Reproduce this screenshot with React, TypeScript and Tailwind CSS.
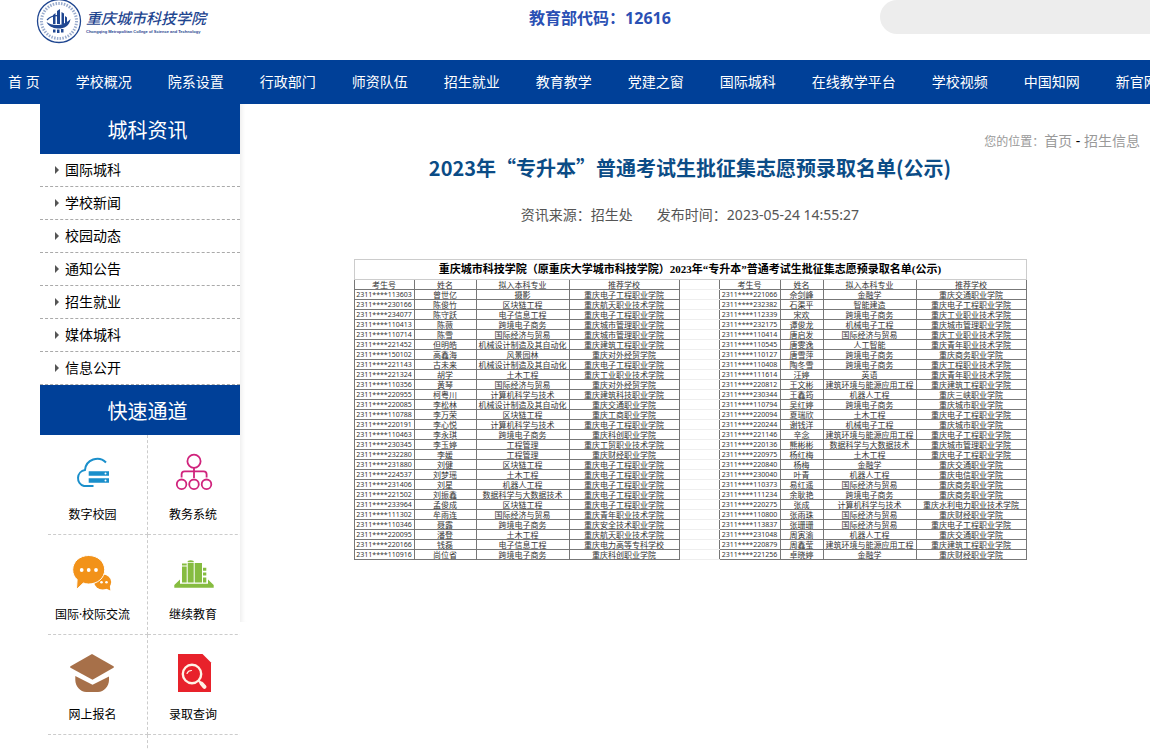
import { ReactNode } from "react";

const navItems = [
  "首 页",
  "学校概况",
  "院系设置",
  "行政部门",
  "师资队伍",
  "招生就业",
  "教育教学",
  "党建之窗",
  "国际城科",
  "在线教学平台",
  "学校视频",
  "中国知网",
  "新官网",
];

const newsItems = [
  "国际城科",
  "学校新闻",
  "校园动态",
  "通知公告",
  "招生就业",
  "媒体城科",
  "信息公开",
];

const columns = ["考生号", "姓名", "拟入本科专业", "推荐学校"];

// number, name, major, school
const leftRows = [
  ["2311****113603", "曾世亿", "摄影", "重庆电子工程职业学院"],
  ["2311****230166", "陈俊竹", "区块链工程", "重庆航天职业技术学院"],
  ["2311****234077", "陈守跃", "电子信息工程", "重庆电子工程职业学院"],
  ["2311****110413", "陈薇", "跨境电子商务", "重庆城市管理职业学院"],
  ["2311****110714", "陈雪", "国际经济与贸易", "重庆城市管理职业学院"],
  ["2311****221452", "但明皓", "机械设计制造及其自动化", "重庆建筑工程职业学院"],
  ["2311****150102", "高鑫海", "风景园林", "重庆对外经贸学院"],
  ["2311****221143", "古未来", "机械设计制造及其自动化", "重庆电子工程职业学院"],
  ["2311****221324", "胡学", "土木工程", "重庆工业职业技术学院"],
  ["2311****110356", "黄琴", "国际经济与贸易", "重庆对外经贸学院"],
  ["2311****220955", "柯粤川", "计算机科学与技术", "重庆建筑科技职业学院"],
  ["2311****220085", "李松林", "机械设计制造及其自动化", "重庆交通职业学院"],
  ["2311****110788", "李万荣", "区块链工程", "重庆工商职业学院"],
  ["2311****220191", "李心悦", "计算机科学与技术", "重庆电子工程职业学院"],
  ["2311****110463", "李永琪", "跨境电子商务", "重庆科创职业学院"],
  ["2311****230345", "李玉婷", "工程管理", "重庆工贸职业技术学院"],
  ["2311****232280", "李媛", "工程管理", "重庆财经职业学院"],
  ["2311****231880", "刘健", "区块链工程", "重庆电子工程职业学院"],
  ["2311****224537", "刘梦瑶", "土木工程", "重庆电子工程职业学院"],
  ["2311****231406", "刘星", "机器人工程", "重庆电子工程职业学院"],
  ["2311****221502", "刘振鑫", "数据科学与大数据技术", "重庆电子工程职业学院"],
  ["2311****233964", "孟俊成", "区块链工程", "重庆电子工程职业学院"],
  ["2311****111302", "牟雨连", "国际经济与贸易", "重庆青年职业技术学院"],
  ["2311****110346", "聂露", "跨境电子商务", "重庆安全技术职业学院"],
  ["2311****220095", "潘登", "土木工程", "重庆航天职业技术学院"],
  ["2311****220166", "钱磊", "电子信息工程", "重庆电力高等专科学校"],
  ["2311****110916", "尚位省", "跨境电子商务", "重庆科创职业学院"],
];

const rightRows = [
  ["2311****221066", "佘剑峰", "金融学", "重庆交通职业学院"],
  ["2311****232382", "石渠平", "智能建造", "重庆电子工程职业学院"],
  ["2311****112339", "宋欢", "跨境电子商务", "重庆工业职业技术学院"],
  ["2311****232175", "谭俊龙", "机械电子工程", "重庆城市管理职业学院"],
  ["2311****110414", "唐启发", "国际经济与贸易", "重庆工业职业技术学院"],
  ["2311****110545", "唐雯逸", "人工智能", "重庆青年职业技术学院"],
  ["2311****110127", "唐雪萍", "跨境电子商务", "重庆商务职业学院"],
  ["2311****110408", "陶冬雪", "跨境电子商务", "重庆工程职业技术学院"],
  ["2311****111614", "汪婷", "英语", "重庆青年职业技术学院"],
  ["2311****220812", "王文彬", "建筑环境与能源应用工程", "重庆建筑工程职业学院"],
  ["2311****230344", "王鑫筠", "机器人工程", "重庆三峡职业学院"],
  ["2311****110794", "吴红婷", "跨境电子商务", "重庆城市职业学院"],
  ["2311****220094", "夏瑞欣", "土木工程", "重庆电子工程职业学院"],
  ["2311****220244", "谢钱洋", "机械电子工程", "重庆城市职业学院"],
  ["2311****221146", "辛念", "建筑环境与能源应用工程", "重庆电子工程职业学院"],
  ["2311****220136", "熊彬彬", "数据科学与大数据技术", "重庆城市管理职业学院"],
  ["2311****220975", "杨红梅", "土木工程", "重庆电子工程职业学院"],
  ["2311****220840", "杨梅", "金融学", "重庆交通职业学院"],
  ["2311****230040", "叶青", "机器人工程", "重庆电信职业学院"],
  ["2311****110373", "易红遥", "国际经济与贸易", "重庆商务职业学院"],
  ["2311****111234", "余耿艳", "跨境电子商务", "重庆商务职业学院"],
  ["2311****220275", "张成", "计算机科学与技术", "重庆水利电力职业技术学院"],
  ["2311****110800", "张雨珠", "国际经济与贸易", "重庆财经职业学院"],
  ["2311****113837", "张珊珊", "国际经济与贸易", "重庆电子工程职业学院"],
  ["2311****231048", "周寅渝", "机器人工程", "重庆交通职业学院"],
  ["2311****220879", "周鑫莹", "建筑环境与能源应用工程", "重庆建筑工程职业学院"],
  ["2311****221256", "卓晓婷", "金融学", "重庆财经职业学院"],
];

const CloudIcon = () => (
  <svg viewBox="0 0 48 48" className="size-12">
    <path
      d="M37 13.5A12.3 12.3 0 0 0 16 21A8.2 8.2 0 0 0 15 37H24.5"
      fill="none"
      stroke="#1a8fcb"
      strokeWidth="2"
    />
    <path d="M19.7 22.3H40v4.5H19.7zM19.7 29.2H40v4.5H19.7z" fill="#1a8fcb" />
    <circle cx="36.5" cy="24.5" r="1" fill="#fff" />
    <circle cx="36.5" cy="31.4" r="1" fill="#fff" />
  </svg>
);

const TreeIcon = () => (
  <svg viewBox="0 0 48 48" className="size-12" fill="none" stroke="#d0237c" strokeWidth="1.8">
    <circle cx="25" cy="12.3" r="6.6" />
    <circle cx="12.6" cy="35.3" r="4.8" />
    <circle cx="25" cy="35.3" r="4.8" />
    <circle cx="37.5" cy="35.3" r="4.8" />
    <path d="M25 19v10M12.6 28.5v-3.2a3 3 0 0 1 3-3h19a3 3 0 0 1 3 3v3.2" />
  </svg>
);

const ChatIcon = () => (
  <svg viewBox="0 0 48 48" className="size-12" fill="#f29219">
    <ellipse cx="33.7" cy="33" rx="8.5" ry="7.6" />
    <path d="M36 39l5.3 2.6-.6-6z" />
    <path
      d="M19.7 6.5c9 0 16 6.2 16 14.3s-7 14.2-16 14.2c-2.2 0-3.8-.4-5.4-1L7.5 40.5l.6-10C5.3 28 3.7 24.7 3.7 20.8c0-8.1 7-14.3 16-14.3z"
      stroke="#fff"
      strokeWidth="1"
    />
    <g fill="#fff">
      <circle cx="12.7" cy="21" r="1.9" />
      <circle cx="19.7" cy="21" r="1.9" />
      <circle cx="27" cy="21" r="1.9" />
      <circle cx="32.5" cy="33.3" r="1.3" />
      <circle cx="37.5" cy="33.3" r="1.3" />
    </g>
  </svg>
);

const BooksIcon = () => (
  <svg viewBox="0 0 48 48" className="size-12" fill="#86bc40">
    <path d="M11 30.5L5.3 36v2.7h39.4V36L39 30.5v4.2H11z" />
    <path d="M13 17.5h4.7v16H13zM13 14.5h4.7v2H13zM18.7 14h6v19.5h-6zM18.7 12q3-1.5 6 0v1.2h-6zM25.7 14H33v19.5h-7.3z" />
    <path d="M34 18.7h3.3v3H34zM34 23.5h3.3v3H34zM34 28.5h3.3v5H34z" />
  </svg>
);

const CapIcon = () => (
  <svg viewBox="0 0 48 48" className="size-12" fill="#a77049">
    <path d="M23 5l21.5 12.2q1 .8 0 1.6L23.5 30.7 1.5 18.8q-1-.8 0-1.6z" />
    <path d="M6.3 27L23.5 35.7 40 27.5v3.5c0 6-5 12-11 12H17.3c-6 0-11-6-11-12z" />
  </svg>
);

const QueryIcon = () => (
  <svg viewBox="0 0 48 48" className="size-12">
    <path d="M9 5h24.5l8.5 8.5V43H9z" fill="#e8222b" />
    <g fill="none" stroke="#fff4e6" strokeLinecap="round">
      <circle cx="23" cy="25" r="9.2" strokeWidth="2.4" />
      <path d="M18 24.5q1-3 4.5-3" strokeWidth="1.2" />
      <path d="M30 32l1.5 1.5" strokeWidth="2.2" />
      <path d="M32.5 34.5l3 3.3" strokeWidth="4" />
    </g>
  </svg>
);

const shortcuts: { label: string; icon: ReactNode }[] = [
  { label: "数字校园", icon: <CloudIcon /> },
  { label: "教务系统", icon: <TreeIcon /> },
  { label: "国际·校际交流", icon: <ChatIcon /> },
  { label: "继续教育", icon: <BooksIcon /> },
  { label: "网上报名", icon: <CapIcon /> },
  { label: "录取查询", icon: <QueryIcon /> },
];

const Emblem = () => (
  <svg viewBox="0 0 46 46" className="size-[46px]" fill="none" stroke="#1f4690">
    <circle cx="23" cy="23" r="21.5" strokeWidth="1.3" />
    <circle cx="23" cy="23" r="17.5" strokeWidth="3" strokeDasharray="1.5 1.3" opacity="0.45" />
    <g fill="#1f4690" stroke="none">
      <path d="M17 17l2.500-2v11H17zM21 13l3-2v15h-3zM25.500 14l2.500 1.500V26h-2.500zM29 18l2 1.500V25h-2z" />
      <path d="M10.500 24c6 4.500 17 4.500 24-3-1 8-8 10-13 9.500-5-.3-9-2.500-11-6.500z" />
      <path d="M17 31.500h2.500v3H17zM21 31.500h2.500v3.500H21zM25 31h2.500v3.500H25z" />
    </g>
    <path d="M11 22c4-4 8-5 12-4" strokeWidth="1.2" />
  </svg>
);

const SideHeading = ({ children }: { children: ReactNode }) => (
  <h2 className="h-[50px] bg-[#004098] pl-[15px] text-center text-xl leading-[54px] text-white">
    {children}
  </h2>
);

const StudentCells = ({ row }: { row: string[] }) => (
  <>
    <td className="border border-[#777] p-0 text-[7px]">{row[0]}</td>
    <td className="border border-[#777] p-0">{row[1]}</td>
    <td className="border border-[#777] p-0">{row[2]}</td>
    <td className="border border-[#777] p-0">{row[3]}</td>
  </>
);

const HeadCells = () => (
  <>
    {columns.map((name) => (
      <th key={name} className="border border-[#777] p-0 font-normal">
        {name}
      </th>
    ))}
  </>
);

const AdmissionTable = () => (
  <table className="mx-auto mt-[34px] w-full max-w-[673px] table-fixed border-collapse text-center text-[8px] leading-[9px] whitespace-nowrap text-[#333]">
    <colgroup>
      <col className="w-[60px]" />
      <col className="w-[62px]" />
      <col className="w-[93px]" />
      <col className="w-[110px]" />
      <col className="w-[40px]" />
      <col className="w-[61px]" />
      <col className="w-[43px]" />
      <col className="w-[93px]" />
      <col />
    </colgroup>
    <thead>
      <tr>
        <th
          colSpan={9}
          className="border border-[#ccc] p-0 font-['Liberation_Serif','Noto_Sans_CJK_SC',serif] text-[11px] leading-[19px] font-bold text-black"
        >
          重庆城市科技学院（原重庆大学城市科技学院）2023年“专升本”普通考试生批征集志愿预录取名单(公示)
        </th>
      </tr>
      <tr>
        <HeadCells />
        <td className="border-y border-[#eee] p-0" />
        <HeadCells />
      </tr>
    </thead>
    <tbody>
      {leftRows.map((row, i) => (
        <tr key={row[0]}>
          <StudentCells row={row} />
          <td className="border-y border-[#eee] p-0" />
          <StudentCells row={rightRows[i]} />
        </tr>
      ))}
    </tbody>
  </table>
);

export default function App() {
  return (
    <div
      lang="zh-CN"
      className="h-screen overflow-hidden bg-white font-['Noto_Sans','Noto_Sans_CJK_SC',sans-serif] text-sm text-black"
    >
      <div className="min-w-[1200px]">
        <header className="grid h-[60px] grid-cols-[1fr_auto_1fr] items-start">
          <a href="#" className="flex pl-9 text-[#1f4690]">
            <span className="-mt-0.5">
              <Emblem />
            </span>
            <span className="ml-1 pt-2">
              <span className="block text-[15px] leading-5 font-medium italic">重庆城市科技学院</span>
              <span className="block font-['Liberation_Sans',sans-serif] text-[4px] leading-2 font-bold">
                Chongqing Metropolitan College of Science and Technology
              </span>
            </span>
          </a>
          <p className="text-base leading-9 font-bold text-[#2a50b4]">教育部代码：12616</p>
          <input
            type="text"
            aria-label="搜索"
            className="h-[34px] w-80 justify-self-end rounded-full bg-[#ededed] px-5 outline-none"
          />
        </header>

        <nav className="flex h-11 gap-9 bg-[#004098] px-2 leading-11 whitespace-nowrap text-white">
          {navItems.map((item) => (
            <a key={item} href="#">
              {item}
            </a>
          ))}
        </nav>

        <div className="flex items-start px-10">
          <aside className="w-[200px] shrink-0 overflow-hidden">
            <SideHeading>城科资讯</SideHeading>
            <ul>
              {newsItems.map((item) => (
                <li key={item} className="border-b border-dashed border-[#aaa]">
                  <a href="#" className="flex h-8 items-center gap-1.5 pl-[15px]">
                    <svg viewBox="0 0 4 8" className="h-2 w-1" fill="#555">
                      <path d="M0 0l4 4-4 4z" />
                    </svg>
                    {item}
                  </a>
                </li>
              ))}
            </ul>
            <SideHeading>快速通道</SideHeading>
            <div className="ml-2 grid w-[200px] grid-cols-2 text-xs">
              {shortcuts.map(({ label, icon }) => (
                <a
                  key={label}
                  href="#"
                  className="flex h-[100px] flex-col items-center border-b border-dashed border-[#ccc] pt-3.5 pr-2.5 odd:border-r"
                >
                  {icon}
                  <span className="mt-2 leading-5">{label}</span>
                </a>
              ))}
              <div className="h-[100px] border-r border-dashed border-[#ccc]" />
            </div>
          </aside>

          <main className="min-h-[518px] flex-1 pt-[27px] pr-5 shadow-[inset_5px_0_4px_-3px_#eee]">
            <div className="text-right leading-5 text-[#999]">
              <span className="text-xs">您的位置：</span>
              <a href="#">首页</a>
              <span className="text-black"> - </span>
              <a href="#">招生信息</a>
            </div>
            <h1 className="text-center font-['Noto_Sans_CJK_SC',sans-serif] text-xl leading-[34px] font-bold text-[#0b4c86]">
              2023年“专升本”普通考试生批征集志愿预录取名单(公示)
            </h1>
            <p className="mt-5 flex justify-center gap-6 leading-5 text-[#555]">
              <span>资讯来源：招生处</span>
              <span>发布时间：2023-05-24 14:55:27</span>
            </p>
            <AdmissionTable />
          </main>
        </div>
      </div>
    </div>
  );
}
